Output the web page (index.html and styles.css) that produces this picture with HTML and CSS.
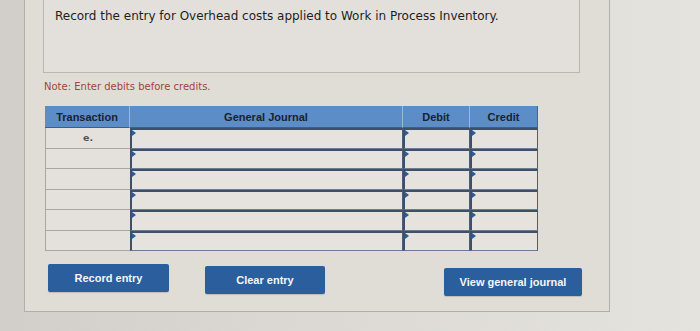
FILE: index.html
```html
<!DOCTYPE html>
<html lang="en">
<head>
<meta charset="utf-8">
<title>Journal entry</title>
<link rel="stylesheet" href="styles.css">
</head>
<body>
<div class="panel">
  <div class="question">Record the entry for Overhead costs applied to Work in Process Inventory.</div>
  <div class="note">Note: Enter debits before credits.</div>
  <div class="journal">
    <div class="th">Transaction</div>
    <div class="th">General Journal</div>
    <div class="th">Debit</div>
    <div class="th last">Credit</div>

    <div class="tx">e.</div><div class="inp"></div><div class="inp"></div><div class="inp"></div>
    <div class="tx"></div><div class="inp"></div><div class="inp"></div><div class="inp"></div>
    <div class="tx"></div><div class="inp"></div><div class="inp"></div><div class="inp"></div>
    <div class="tx"></div><div class="inp"></div><div class="inp"></div><div class="inp"></div>
    <div class="tx"></div><div class="inp"></div><div class="inp"></div><div class="inp"></div>
    <div class="tx"></div><div class="inp"></div><div class="inp"></div><div class="inp"></div>
  </div>
  <div class="actions">
    <button class="btn btn-record">Record entry</button>
    <button class="btn btn-clear">Clear entry</button>
    <button class="btn btn-view">View general journal</button>
  </div>
</div>
</body>
</html>
```
FILE: styles.css
```css
html, body {
  margin: 0;
  padding: 0;
}
body {
  width: 700px;
  height: 331px;
  overflow: hidden;
  background: linear-gradient(90deg, #d2cfca 0%, #dbd8d3 40%, #e5e3de 100%);
  font-family: "DejaVu Sans", sans-serif;
}
.panel {
  margin-left: 24px;
  width: 586px;
  height: 312px;
  box-sizing: border-box;
  border: 1px solid #b3b0ab;
  border-top: 0;
  padding-left: 18px;
  background: #e0ddd7;
}
.question {
  width: 537px;
  height: 73px;
  box-sizing: border-box;
  border: 1px solid #bab7b2;
  border-top: 0;
  background: #e3e0db;
  padding: 9px 0 0 11px;
  font-size: 12px;
  line-height: 15px;
  color: #1e1e1e;
}
.note {
  margin-top: 8px;
  margin-left: 1px;
  font-size: 10px;
  line-height: 12px;
  color: #a04538;
}
.journal {
  margin-top: 13px;
  margin-left: 2px;
  width: 493px;
  display: grid;
  grid-template-columns: 85px 273px 67px 68px;
  grid-template-rows: 22px repeat(6, 20.5px);
  font-family: "Liberation Sans", Arial, sans-serif;
}
.th {
  background: #5d8dc6;
  border-right: 1px solid #9bb7d9;
  border-bottom: 1px solid #3c5f88;
  display: flex;
  align-items: center;
  justify-content: center;
  font-size: 11px;
  font-weight: bold;
  color: #19222f;
}
.th.last {
  border-right: 1px solid #44658f;
}
.tx {
  background: #e4e1dc;
  border-bottom: 1px solid #a9a7a3;
  border-left: 1px solid #a9a7a3;
  display: flex;
  align-items: center;
  justify-content: center;
  font-family: "DejaVu Sans", sans-serif;
  font-size: 9.5px;
  font-weight: bold;
  color: #555;
}
.inp {
  position: relative;
  background: #e6e3de;
  border-top: 2px solid #3e5068;
  border-left: 2px solid #3e5068;
  border-right: 1px solid #4d5f78;
  border-bottom: 1px solid #6d7d92;
}
.inp::before {
  content: "";
  position: absolute;
  left: 0;
  top: 0;
  border-top: 3px solid transparent;
  border-bottom: 3px solid transparent;
  border-left: 4px solid #2d5a99;
}
.actions {
  margin-top: 13px;
  display: flex;
  align-items: flex-start;
}
.btn {
  height: 28px;
  border: 0;
  border-radius: 2px;
  background: #2b5e9d;
  color: #f4f6fa;
  font-family: "Liberation Sans", Arial, sans-serif;
  font-size: 11px;
  font-weight: bold;
  padding: 0;
  box-shadow: 0 1px 1px rgba(0,0,0,0.15);
}
.btn-record {
  margin-left: 5px;
  width: 121px;
}
.btn-clear {
  margin-left: 36px;
  margin-top: 2px;
  width: 120px;
}
.btn-view {
  margin-left: 119px;
  margin-top: 4px;
  width: 138px;
}
```
